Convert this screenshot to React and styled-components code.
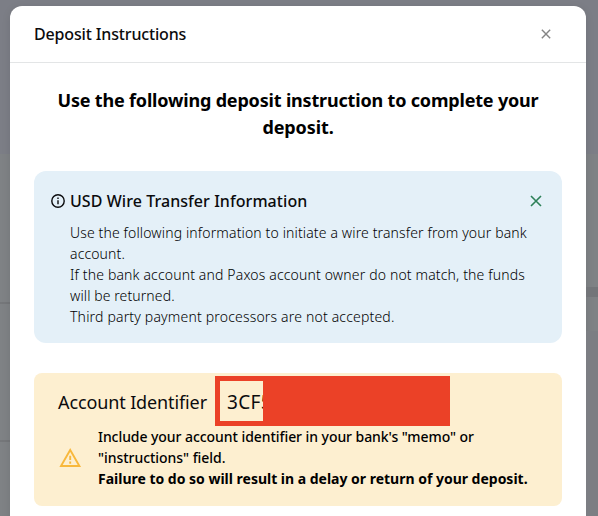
import React from "react";
import styled, { createGlobalStyle } from 'styled-components';

const GlobalStyle = createGlobalStyle`
  * {
    box-sizing: border-box;
  }
  body {
    margin: 0;
    overflow: hidden;
    background: #7f8285;
    font-family: 'Noto Sans', 'Open Sans', sans-serif;
    color: #0b0b0d;
  }
  h1, h2, h3, p {
    margin: 0;
  }
`;

const Page = styled.div`
  display: grid;
  grid-template-columns: 10px 576px 12px;
  height: 516px;
  overflow: hidden;
  background: linear-gradient(#7c7e86 0 154px, #7f8285 154px);
`;

const Side = styled.div`
  display: flex;
  flex-direction: column;
`;

const Strip = styled.div`
  height: ${props => props.$height}px;
  background: ${props => props.$color || 'transparent'};
`;

const Modal = styled.div`
  height: 540px;
  margin-top: 6px;
  border-radius: 12px;
  background: #fff;
  box-shadow: 0 2px 8px rgba(0, 0, 0, 0.1);
`;

const Header = styled.header`
  display: flex;
  align-items: center;
  justify-content: space-between;
  height: 57px;
  padding: 0 35px 0 24px;
  border-bottom: 1px solid #e3e5e6;
`;

const Title = styled.h1`
  font-size: 16px;
  font-weight: 500;
  line-height: 24px;
`;

const CloseButton = styled.button`
  display: flex;
  padding: 0;
  border: 0;
  background: none;
  color: ${props => props.$color};
`;

const Content = styled.div`
  padding: 24px 24px 0;
`;

const Lead = styled.h2`
  height: 84px;
  font-size: 18px;
  font-weight: 700;
  line-height: 27px;
  text-align: center;
  color: #000;
`;

const Line = styled.span`
  display: block;
  white-space: nowrap;
  letter-spacing: ${props => props.$tracking || 0}px;
`;

const Info = styled.section`
  height: 172px;
  padding: 18px 20px 0 17px;
  border-radius: 12px;
  background: #e4f0f8;
`;

const InfoHead = styled.div`
  display: flex;
  align-items: center;
  height: 24px;
  svg {
    flex: none;
  }
`;

const InfoTitle = styled.h3`
  flex: 1;
  margin-left: 5px;
  font-size: 16px;
  font-weight: 500;
  line-height: 24px;
`;

const InfoText = styled.p`
  margin: 9px 0 0 19px;
  font-size: 14px;
  font-weight: 300;
  line-height: 21px;
  color: #000;
`;

const Warning = styled.section`
  height: 133px;
  margin-top: 30px;
  padding: 3px 24px 0;
  border-radius: 8px;
  background: #fdefd0;
`;

const Account = styled.div`
  display: flex;
  align-items: center;
  height: 50px;
  font-size: 18px;
`;

const AccountLabel = styled.div`
  width: 157px;
  padding-top: 2px;
`;

const Redacted = styled.div`
  width: 235px;
  height: 50px;
  padding: 5px;
  background: #eb4127;
`;

const Visible = styled.div`
  width: 43px;
  height: 40px;
  padding-left: 7px;
  overflow: hidden;
  background: #fdefd0;
  font-size: 19px;
  line-height: 43px;
  letter-spacing: 0.3px;
  white-space: nowrap;
`;

const Note = styled.div`
  display: flex;
  align-items: center;
  svg {
    flex: none;
    margin-right: 16px;
  }
`;

const NoteText = styled.p`
  font-size: 14px;
  font-weight: 500;
  line-height: 21px;
  color: #000;
  strong {
    font-weight: 700;
  }
`;

const Cross = ({ size, width }) => (
  <svg width={size} height={size} viewBox="0 0 12 12" stroke="currentColor" strokeWidth={width}>
    <path d="M1 1l10 10M11 1L1 11" />
  </svg>
);

const InfoIcon = () => (
  <svg width="14" height="14" viewBox="0 0 14 14" fill="none" stroke="#0b0b0d" strokeWidth="1.4">
    <circle cx="7" cy="7" r="6.2" />
    <path d="M7 6.2v4M7 3.6v1.4" />
  </svg>
);

const WarningIcon = () => (
  <svg width="24" height="20" viewBox="0 0 24 20" fill="none" stroke="#f8b83c" strokeWidth="1.9">
    <path d="M12.2 2L21.4 18H3z" />
    <path d="M12.2 7.8v4.2M12.2 13.6v2.2" />
  </svg>
);

const App = () => {
  return (
    <>
      <GlobalStyle />
      <Page>
        <Side>
          <Strip $height={302} />
          <Strip $height={2} $color="#75777a" />
          <Strip $height={136} />
          <Strip $height={2} $color="#75777a" />
        </Side>
        <Modal>
          <Header>
            <Title><Line $tracking={-0.15}>Deposit Instructions</Line></Title>
            <CloseButton $color="#858585" aria-label="Close">
              <Cross size={10} width={1.7} />
            </CloseButton>
          </Header>
          <Content>
            <Lead>
              <Line $tracking={-0.18}>Use the following deposit instruction to complete your</Line>
              <Line $tracking={-0.1}>deposit.</Line>
            </Lead>
            <Info>
              <InfoHead>
                <InfoIcon />
                <InfoTitle><Line $tracking={0.06}>USD Wire Transfer Information</Line></InfoTitle>
                <CloseButton $color="#2d8058" aria-label="Dismiss">
                  <Cross size={12} width={1.6} />
                </CloseButton>
              </InfoHead>
              <InfoText>
                <Line $tracking={0.135}>Use the following information to initiate a wire transfer from your bank</Line>
                <Line $tracking={0.13}>account.</Line>
                <Line $tracking={0.155}>If the bank account and Paxos account owner do not match, the funds</Line>
                <Line $tracking={0.1}>will be returned.</Line>
                <Line $tracking={0.18}>Third party payment processors are not accepted.</Line>
              </InfoText>
            </Info>
            <Warning>
              <Account>
                <AccountLabel><Line $tracking={-0.12}>Account Identifier</Line></AccountLabel>
                <Redacted>
                  <Visible>3CF5</Visible>
                </Redacted>
              </Account>
              <Note>
                <WarningIcon />
                <NoteText>
                  <Line $tracking={-0.06}>Include your account identifier in your bank's "memo" or</Line>
                  <Line $tracking={-0.04}>"instructions" field.</Line>
                  <strong><Line $tracking={-0.01}>Failure to do so will result in a delay or return of your deposit.</Line></strong>
                </NoteText>
              </Note>
            </Warning>
          </Content>
        </Modal>
        <Side>
          <Strip $height={287} />
          <Strip $height={10} $color="#737579" />
          <Strip $height={34} />
          <Strip $height={185} $color="#7c7e83" />
        </Side>
      </Page>
    </>
  );
};
export default App;
